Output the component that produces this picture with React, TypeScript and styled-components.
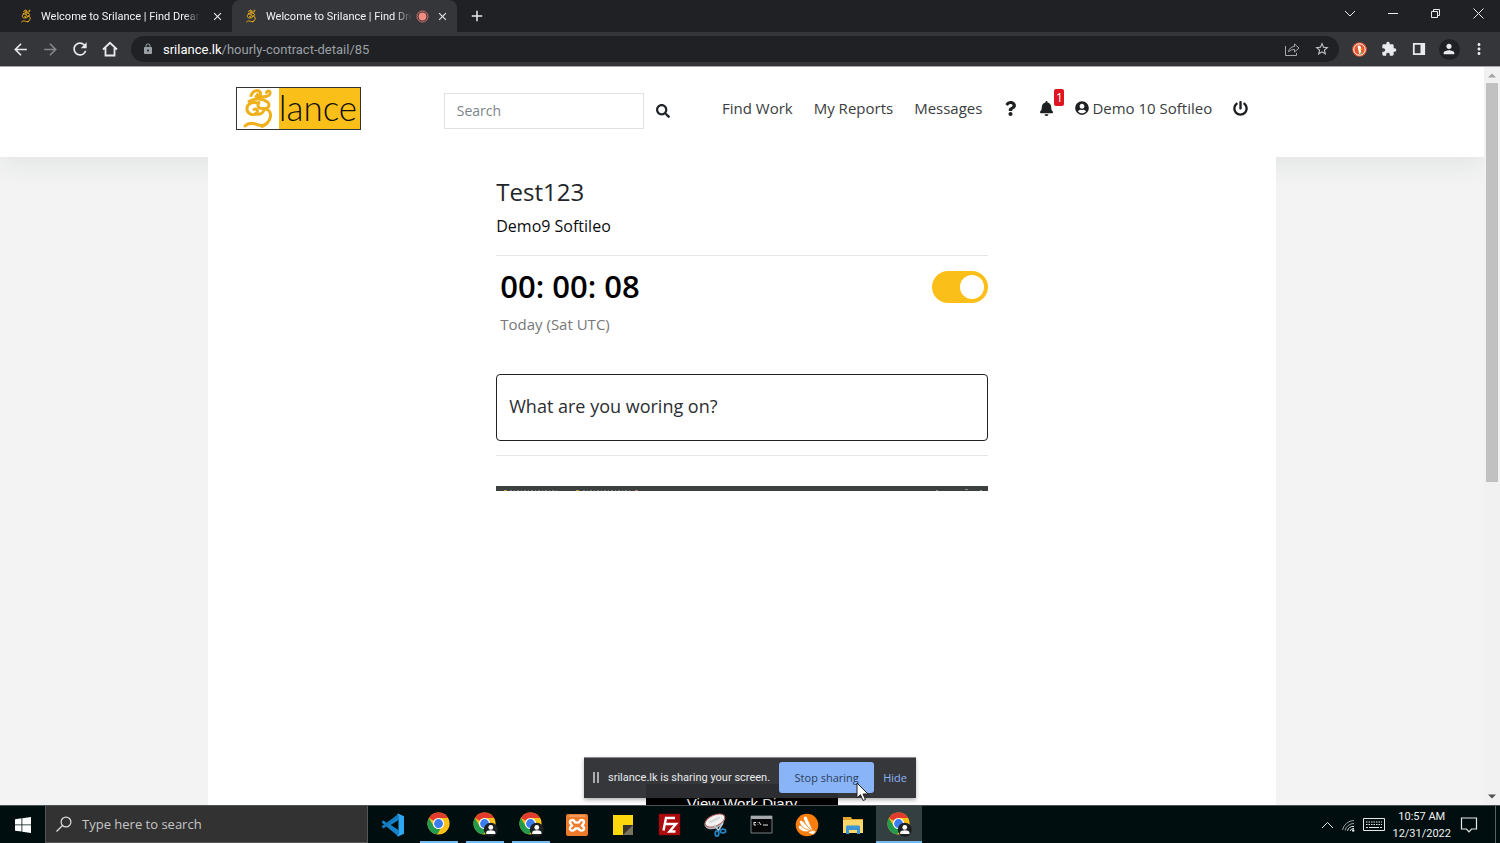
import React from "react";
import styled, { createGlobalStyle, css } from "styled-components";
import { FaSearch, FaQuestion, FaBell, FaUserCircle, FaPowerOff } from "react-icons/fa";
import {
  MdAdd,
  MdArrowBack,
  MdArrowForward,
  MdClose,
  MdExtension,
  MdLock,
  MdMoreVert,
  MdPerson,
  MdRefresh,
  MdStarBorder,
} from "react-icons/md";

const uiFont = '"Open Sans", "Noto Sans", sans-serif';
const compactFont = 'Roboto, "Open Sans", sans-serif';
const amber = "#fbbf1a";

const GlobalStyle = createGlobalStyle`
  *, *::before, *::after { box-sizing: border-box; }
  body { margin: 0; background: #fff; font-family: ${uiFont}; color: #212529; }
  button { border: 0; padding: 0; background: none; color: inherit; font: inherit; }
  a { color: inherit; text-decoration: none; }
  h1, h2, p { margin: 0; }
  svg { display: block; flex: none; }
`;

const Desktop = styled.div`
  position: relative;
  display: flex;
  flex-direction: column;
  height: 100vh;
  overflow: hidden;
`;

/* ---------- browser chrome ---------- */

const TabStrip = styled.div`
  display: flex;
  flex: none;
  height: 32px;
  padding-left: 7px;
  background: #202124;
  color: #e8eaed;
`;

const Tab = styled.div<{ $active?: boolean }>`
  display: flex;
  align-items: center;
  width: 225px;
  padding: 0 8px 0 12px;
  font: 11px ${compactFont};
  border-radius: 8px 8px 0 0;
  background: ${(p) => (p.$active ? "#35363a" : "transparent")};
`;

const TabTitle = styled.span<{ $fade: string }>`
  flex: 1;
  min-width: 0;
  margin: 0 4px 0 8px;
  overflow: hidden;
  white-space: nowrap;
  color: #f1f3f4;
  mask-image: linear-gradient(to right, #000 ${(p) => p.$fade}, transparent);
`;

const TabClose = styled.button`
  display: grid;
  place-items: center;
  width: 14px;
  height: 14px;
  margin-left: 6px;
`;

const NewTab = styled.button`
  display: grid;
  place-items: center;
  width: 40px;
`;

const WindowButtons = styled.div`
  display: flex;
  margin-left: auto;
  padding-bottom: 5px;
`;

const WindowButton = styled.button`
  display: grid;
  place-items: center;
  width: 43px;
`;

const Toolbar = styled.div`
  display: flex;
  align-items: center;
  flex: none;
  height: 34px;
  padding: 0 6px 0 5px;
  background: #35363a;
  color: #e8eaed;
`;

const ToolButton = styled.button<{ $dim?: boolean }>`
  display: grid;
  place-items: center;
  width: 30px;
  height: 28px;
  color: ${(p) => (p.$dim ? "#85878a" : "#e8eaed")};
`;

const Omnibox = styled.div`
  display: flex;
  align-items: center;
  flex: 1;
  height: 26px;
  margin: 0 5px 0 6px;
  padding: 0 2px 0 11px;
  border-radius: 13px;
  background: #202124;
  color: #9aa0a6;
  font: 13px ${compactFont};
`;

const Url = styled.span`
  flex: 1;
  margin-left: 9px;
  b { font-weight: 400; color: #fff; }
`;

const Avatar = styled.span`
  display: grid;
  place-items: center;
  width: 21px;
  height: 21px;
  border-radius: 50%;
  background: #202124;
`;

/* ---------- web page ---------- */

const Viewport = styled.div`
  display: flex;
  flex: 1;
  min-height: 0;
  border-top: 1px solid #a5a6a8;
`;

const Page = styled.div`
  flex: 1;
  min-width: 0;
  overflow: hidden;
  background: #f3f3f3;
`;

const SiteHeader = styled.header`
  height: 90px;
  background: #fff;
  box-shadow: 0 8px 24px rgba(40, 60, 60, 0.08);
`;

const HeaderInner = styled.div`
  display: flex;
  align-items: center;
  width: 72%;
  height: 82px;
  margin: 0 auto;
  padding: 0 28px;
`;

const Logo = styled.a`
  display: flex;
  width: 125px;
  height: 43px;
  border: 1px solid #333;
  background: #fff;
`;

const LogoWord = styled.span`
  flex: 1;
  background: ${amber};
  color: #111;
  font: 300 35px/39px Lato, sans-serif;
`;

const SearchForm = styled.form`
  display: flex;
  align-items: center;
  margin: 5px 0 0 83px;
`;

const SearchInput = styled.input`
  width: 200px;
  height: 36px;
  padding: 0 12px 1px;
  border: 1px solid #dfe1e3;
  background: #fff;
  font: 14px ${uiFont};
  &::placeholder { color: #7d8388; opacity: 1; }
`;

const SearchButton = styled.button`
  margin-left: 12px;
`;

const Nav = styled.nav`
  display: flex;
  align-items: center;
  gap: 21px;
  margin-left: auto;
  font-size: 15px;
  line-height: 20px;
  color: #3a3d40;
  white-space: nowrap;
  svg { color: #1d1f21; }
`;

const NavUser = styled.a`
  display: flex;
  align-items: center;
  gap: 3px;
`;

const Bell = styled.a`
  position: relative;
`;

const Badge = styled.span`
  position: absolute;
  left: 15px;
  top: -12px;
  width: 10px;
  border-radius: 2px;
  background: #df1522;
  color: #fff;
  font-size: 12px;
  line-height: 17px;
  text-align: center;
`;

const Sheet = styled.main`
  position: relative;
  width: 72%;
  min-height: 100%;
  margin: 0 auto;
  padding-top: 16px;
  background: #fff;
`;

const Contract = styled.section`
  display: flex;
  flex-direction: column;
  width: 46%;
  margin: 0 auto;
`;

const Title = styled.h1`
  font-size: 24px;
  font-weight: 400;
  line-height: 38px;
`;

const Client = styled.h2`
  font-size: 16px;
  font-weight: 400;
  line-height: 30px;
  color: #0c0d0e;
`;

const Rule = styled.hr`
  width: 100%;
  height: 1px;
  margin: 14px 0 0;
  border: 0;
  background: #e6e6e6;
`;

const TimerRow = styled.div`
  display: flex;
  align-items: center;
  justify-content: space-between;
  height: 62px;
  padding-left: 4px;
`;

const Timer = styled.time`
  font-size: 31px;
  font-weight: 600;
  line-height: 40px;
  padding-bottom: 2px;
  color: #000;
`;

const Switch = styled.input`
  appearance: none;
  width: 56px;
  height: 32px;
  margin: 0;
  padding: 4px;
  border-radius: 16px;
  background: ${amber};
  &::before {
    content: "";
    display: block;
    width: 24px;
    height: 24px;
    margin-left: 24px;
    border-radius: 50%;
    background: #fff;
  }
`;

const Today = styled.p`
  margin: -4px 0 40px;
  padding-left: 4px;
  font-size: 15px;
  line-height: 20px;
  color: #777;
`;

const TaskInput = styled.input`
  width: 100%;
  height: 67px;
  padding: 0 12px 4px;
  border: 1px solid #222;
  border-radius: 4px;
  background: #fff;
  color: #2b2e31;
  font: 18px ${uiFont};
`;

const LastCapture = styled.div`
  height: 298px;
  margin-top: 30px;
`;

const CaptureStrip = styled.div`
  height: 5px;
  background: #3c403f;
`;

const DiaryButton = styled.button`
  align-self: center;
  width: 192px;
  height: 38px;
  background: #000;
  color: #fff;
  font: 15px "Liberation Sans", Arial, sans-serif;
`;

const Scrollbar = styled.div`
  display: flex;
  flex-direction: column;
  align-items: center;
  justify-content: space-between;
  width: 16px;
  padding: 6px 0;
  background: #f1f1f1;
`;

const Thumb = styled.div`
  width: 12px;
  height: 55%;
  margin: 5px 0 auto;
  background: #c1c1c1;
`;

/* ---------- screen sharing notice ---------- */

const ShareBar = styled.div`
  position: absolute;
  left: 50%;
  bottom: 45px;
  transform: translateX(-50%);
  display: flex;
  align-items: center;
  width: 332px;
  height: 41px;
  padding: 0 9px 2px 9px;
  border-top: 1px solid #8a8b8d;
  background: rgba(46, 47, 50, 0.96);
  box-shadow: 0 2px 4px rgba(0, 0, 0, 0.3);
  color: #e8eaed;
  font-size: 11px;
  white-space: nowrap;
`;

const ShareText = styled.span`
  flex: 1;
  margin-left: 9px;
  font-family: ${compactFont};
`;

const StopButton = styled.button`
  width: 95px;
  height: 31px;
  border-radius: 3px;
  background: #8ab4f8;
  color: #2c3e5c;
`;

const HideButton = styled.button`
  margin-left: 9px;
  color: #8ab4f8;
`;

const Pointer = styled.svg`
  position: absolute;
  left: 272px;
  top: 24px;
`;

/* ---------- taskbar ---------- */

const Taskbar = styled.footer`
  display: flex;
  flex: none;
  height: 38px;
  border-top: 1px solid #4b5454;
  background: #000e0f;
  color: #e6e6e6;
`;

const StartButton = styled.button`
  display: grid;
  place-items: center;
  width: 45px;
`;

const TaskSearch = styled.label`
  display: flex;
  align-items: center;
  gap: 10px;
  width: 323px;
  margin-right: 2px;
  padding-left: 10px;
  border: 1px solid #565656;
  border-width: 0 1px 1px;
  background: #323232;
`;

const TaskSearchInput = styled.input`
  flex: 1;
  min-width: 0;
  padding: 0;
  border: 0;
  background: transparent;
  font: 13px ${uiFont};
  &::placeholder { color: #c6c6c6; opacity: 1; }
`;

const AppButton = styled.button<{ $running?: boolean; $active?: boolean }>`
  display: grid;
  place-items: center;
  width: 46px;
  ${(p) =>
    p.$running &&
    css`
      background: linear-gradient(#76b9ed, #76b9ed) center bottom / 38px 2px no-repeat;
    `}
  ${(p) =>
    p.$active &&
    css`
      background: linear-gradient(#76b9ed, #76b9ed) center bottom / 100% 2px no-repeat, #333f40;
    `}
`;

const Tray = styled.div`
  display: flex;
  align-items: center;
  gap: 7px;
  margin-left: auto;
  padding-right: 4px;
`;

const Clock = styled.time`
  font: 11px/17px ${compactFont};
  text-align: center;
  color: #f0f0f0;
`;

const ShowDesktop = styled.button`
  align-self: stretch;
  width: 1px;
  margin-left: 7px;
  background: #5a6363;
`;

/* ---------- drawings ---------- */

const SriMark = ({ w, h, weight }: { w: number; h: number; weight: number }) => (
  <svg width={w} height={h} viewBox="0 0 42 41" fill="none" stroke="#eeb11c" strokeWidth={weight} strokeLinecap="round">
    <path d="M14 7.500c2-5 7-6 9-3.500s-1 4-2.500 2.500M19 8.500c6 .5 13 1 14-3 .5-3-3-3.500-3.500-1" />
    <path d="M12 13.500c6-4 14-3 18.500.5 3 3 1 6.500-2.500 6.500" />
    <path d="M21 15c-7-1.500-11.500 1.500-11 6.500.5 4.500 6 6.500 9 4s.5-5.500-2-4" />
    <path d="M22 14.500c-2 3-1 6 3 6 6-.5 9 3 8.500 8C33 33 29 37 25 38.500" />
    <path d="M19 26c4 1 7-1 8-4" />
    <path d="M8 38c4-4 8-3 12-1.500s8 1 10-1.500" />
  </svg>
);

const ChromeLogo = ({ profile }: { profile?: boolean }) => (
  <svg width="25" height="25" viewBox="0 0 26 26">
    <circle cx="12" cy="12" r="11.5" fill="#fbc116" />
    <path d="M2 6.2A11.5 11.5 0 0 1 22 6.3H12A5.7 5.7 0 0 0 7 9.2z" fill="#e33b2e" />
    <path d="M2 6.2a11.5 11.5 0 0 0 8.6 17.2l5-8.6a5.7 5.7 0 0 1-8.6 0z" fill="#229c4c" />
    <circle cx="12" cy="12" r="5.8" fill="#fff" />
    <circle cx="12" cy="12" r="4.6" fill="#3b7ded" />
    {profile && (
      <g>
        <circle cx="18.5" cy="18.5" r="7.3" fill="#1f2022" />
        <circle cx="18.5" cy="16" r="2.5" fill="#fff" />
        <path d="M13.7 23v-1.5c0-3.3 9.6-3.3 9.6 0V23z" fill="#fff" />
      </g>
    )}
  </svg>
);

const CodeLogo = () => (
  <svg width="24" height="24" viewBox="0 0 24 24">
    <path d="M17.5 1 6.8 10.8 2.6 7.5 1 8.4v1.4l16.5 13.7V17L9.7 12l7.8-5z" fill="#1583cc" />
    <path d="m1 14.2 1.6 1.3L17.5 4V1L1 13z" fill="#1478bd" />
    <path d="M17 .5 23 3.3v17.4l-6 2.8-1-.4 1.5-1.800V2.800L16 .9z" fill="#2ea7f0" />
  </svg>
);

const XamppLogo = () => (
  <svg width="24" height="24" viewBox="0 0 24 24">
    <rect x="1" y="1" width="22" height="22" rx="2" fill="#ee7a2b" />
    <path d="M4 3h16" stroke="#f9bd91" />
    <path
      d="M9.500 8.500c-1-2.500-5-1.500-4.500 1 .2 1.500 1.500 2 2 3-1.500 1-3 3-1.500 4.500s4.500 0 5-1.500h3c.5 1.500 3.500 3 5 1.500s0-3.500-1.500-4.500c.5-1 1.800-1.500 2-3 .5-2.500-3.500-3.500-4.500-1-.5 1.500-4.500 1.500-5 0z"
      fill="none"
      stroke="#fff"
      strokeWidth="2.400"
    />
  </svg>
);

const NotesLogo = () => (
  <svg width="22" height="22" viewBox="0 0 22 22">
    <path d="M1 1h20v20H1z" fill="#fbd70c" />
    <path d="M11 11h10v10H11z" fill="#4a4738" />
    <path d="M11 21V11h10z" fill="#36342d" />
    <path d="M21 11v10H11z" fill="#77735f" />
  </svg>
);

const FileZillaLogo = () => (
  <svg width="23" height="23" viewBox="0 0 23 23">
    <rect x="1" y="1" width="21" height="21" fill="#ae0b0e" stroke="#7e0a0c" strokeDasharray="1 1" />
    <path d="M5.500 17.500 8 5h9M6.800 11h6M12 11h6l-6.500 7.500h6" fill="none" stroke="#fff" strokeWidth="2.400" />
  </svg>
);

const SnipLogo = () => (
  <svg width="25" height="24" viewBox="0 0 25 24">
    <ellipse cx="11.500" cy="9" rx="10.500" ry="6.500" transform="rotate(-24 11.500 9)" fill="#aeb4b8" />
    <ellipse cx="12" cy="7.500" rx="10.500" ry="5.500" transform="rotate(-24 12 7.500)" fill="#f1f1f1" stroke="#b8605c" />
    <path d="M6 9.500l11-5" stroke="#d4d7d9" strokeWidth="2" />
    <path d="m11 12 5 6M20 10l-5 8" stroke="#b9cfdf" strokeWidth="1.500" />
    <ellipse cx="14" cy="20.500" rx="1.800" ry="2.600" fill="none" stroke="#2682bf" strokeWidth="1.800" />
    <ellipse cx="20" cy="18" rx="2.600" ry="1.800" fill="none" stroke="#2682bf" strokeWidth="1.800" />
  </svg>
);

const TerminalLogo = () => (
  <svg width="23" height="20" viewBox="0 0 23 20">
    <path d="M1 1h21v17H1z" fill="#070707" stroke="#777f80" />
    <path d="M1 1h21v3H1z" fill="#a5abac" />
    <path d="M4 7.500h2M4 7v3h2M8 7v.5M8 9.500v.5M9 7l2 3M13 10h5" stroke="#e2e2e2" fill="none" />
  </svg>
);

const AvastLogo = () => (
  <svg width="24" height="24" viewBox="0 0 24 24">
    <circle cx="12" cy="12" r="11.300" fill="#fb7d0b" />
    <g fill="#fff" stroke="#fb7d0b" strokeWidth=".8">
      <path d="M3.300 14c.2-1.500 1.800-1.800 3-1.200L17 18c-5.500 2-12.500.5-13.700-4z" />
      <path d="M4.500 8.500c.5-1.500 2.300-1.500 3.300-.3L17.500 18C11 17 4.500 13.500 4.500 8.500z" />
      <path d="M8.500 4.500c.5-1.800 3-1.800 3.700 0L18 18C13.500 15.500 8.500 9.500 8.500 4.500z" />
      <path d="M16 17.800c2.500-.5 4 0 5 .7-1 1.500-2 2.500-3 3-2-.3-4-1-5-2.500z" />
    </g>
  </svg>
);

const ExplorerLogo = () => (
  <svg width="22" height="20" viewBox="0 0 22 20">
    <path d="M1 2h8l1 2h11v14H1z" fill="#e3a62c" />
    <path d="M1 5h20v13H1z" fill="#fbd668" />
    <path d="M4 19v-7c0-1 .5-1.500 1.500-1.500h11c1 0 1.500.5 1.500 1.500v7h-3v-4H7v4z" fill="#3c95d4" />
  </svg>
);

const taskbarApps = [
  { name: "Visual Studio Code", icon: <CodeLogo /> },
  { name: "Chrome", icon: <ChromeLogo />, running: true },
  { name: "Chrome, work profile", icon: <ChromeLogo profile />, running: true },
  { name: "Chrome, second profile", icon: <ChromeLogo profile />, running: true },
  { name: "XAMPP", icon: <XamppLogo /> },
  { name: "Sticky Notes", icon: <NotesLogo /> },
  { name: "FileZilla", icon: <FileZillaLogo /> },
  { name: "Snipping Tool", icon: <SnipLogo /> },
  { name: "Command Prompt", icon: <TerminalLogo /> },
  { name: "Antivirus", icon: <AvastLogo /> },
  { name: "File Explorer", icon: <ExplorerLogo /> },
  { name: "Chrome, current", icon: <ChromeLogo profile />, active: true },
];

const BrowserChrome = () => (
  <>
    <TabStrip>
      <Tab>
        <SriMark w={14} h={16} weight={3} />
        <TabTitle $fade="90%">Welcome to Srilance | Find Dream</TabTitle>
        <TabClose aria-label="Close tab"><MdClose size={13} /></TabClose>
      </Tab>
      <Tab $active>
        <SriMark w={14} h={16} weight={3} />
        <TabTitle $fade="88%">Welcome to Srilance | Find Dream</TabTitle>
        <svg width="13" height="13" viewBox="0 0 13 13">
          <circle cx="6.500" cy="6.500" r="5.500" fill="none" stroke="#d9746c" />
          <circle cx="6.500" cy="6.500" r="3.900" fill="#f28b82" />
        </svg>
        <TabClose aria-label="Close tab"><MdClose size={13} /></TabClose>
      </Tab>
      <NewTab aria-label="New tab"><MdAdd size={18} /></NewTab>
      <WindowButtons>
        <WindowButton aria-label="Search tabs">
          <svg width="12" height="8" viewBox="0 0 12 8" fill="none" stroke="currentColor"><path d="m1 1 5 5 5-5" /></svg>
        </WindowButton>
        <WindowButton aria-label="Minimize">
          <svg width="10" height="2" viewBox="0 0 10 2"><path d="M0 .5h10" stroke="currentColor" /></svg>
        </WindowButton>
        <WindowButton aria-label="Restore">
          <svg width="11" height="11" viewBox="0 0 11 11" fill="none" stroke="currentColor">
            <path d="M1.500 3.500h6v6h-6zM3.500 3.500v-2h6v6h-2" />
          </svg>
        </WindowButton>
        <WindowButton aria-label="Close">
          <svg width="11" height="11" viewBox="0 0 11 11" stroke="currentColor"><path d="m.5.500 10 10M10.500.5l-10 10" /></svg>
        </WindowButton>
      </WindowButtons>
    </TabStrip>
    <Toolbar>
      <ToolButton aria-label="Back"><MdArrowBack size={19} /></ToolButton>
      <ToolButton aria-label="Forward" $dim><MdArrowForward size={19} /></ToolButton>
      <ToolButton aria-label="Reload"><MdRefresh size={20} /></ToolButton>
      <ToolButton aria-label="Home">
        <svg width="16" height="16" viewBox="0 0 16 16" fill="none" stroke="currentColor" strokeWidth="1.800">
          <path d="M1 8.500 8 1.800l7 6.700M3.500 7v7.500h9V7" />
        </svg>
      </ToolButton>
      <Omnibox>
        <MdLock size={12} />
        <Url><b>srilance.lk</b>/hourly-contract-detail/85</Url>
        <ToolButton aria-label="Share">
          <svg width="15" height="14" viewBox="0 0 15 14" fill="none" stroke="#a5a8ab">
            <path d="M.5 4v9.500h11V11M3.500 10c.5-3.500 3-5.500 6-5.500V2l4.500 4-4.500 4V7.500c-2.500 0-4.500.5-6 2.500z" />
          </svg>
        </ToolButton>
        <ToolButton aria-label="Bookmark"><MdStarBorder size={16} color="#c4c7ca" /></ToolButton>
      </Omnibox>
      <ToolButton aria-label="DuckDuckGo">
        <svg width="15" height="15" viewBox="0 0 15 15">
          <circle cx="7.500" cy="7.500" r="7.300" fill="#e5542e" />
          <circle cx="7.500" cy="7.500" r="5.700" fill="none" stroke="#fff" />
          <path d="M5.500 4c2-1.200 4 0 3.500 3l.3 5-2 .3z" fill="#fff" />
          <path d="M7.500 6.500 11 7l-3 1.200z" fill="#fdc52b" />
          <path d="m7.500 10.500 3 .5-2.500 1.500z" fill="#58b947" />
        </svg>
      </ToolButton>
      <ToolButton aria-label="Extensions"><MdExtension size={16} /></ToolButton>
      <ToolButton aria-label="Side panel">
        <svg width="14" height="14" viewBox="0 0 14 14">
          <path d="M1.800 1.800h10.400v10.400H1.800z" fill="none" stroke="currentColor" strokeWidth="1.800" />
          <path d="M8.500 1h4.500v12H8.500z" fill="currentColor" />
        </svg>
      </ToolButton>
      <ToolButton aria-label="Profile"><Avatar><MdPerson size={16} /></Avatar></ToolButton>
      <ToolButton aria-label="Menu"><MdMoreVert size={18} /></ToolButton>
    </Toolbar>
  </>
);

export default function App() {
  return (
    <Desktop>
      <GlobalStyle />
      <BrowserChrome />
      <Viewport>
        <Page>
          <SiteHeader>
            <HeaderInner>
              <Logo href="#" aria-label="Srilance home">
                <SriMark w={42} h={41} weight={3} />
                <LogoWord>lance</LogoWord>
              </Logo>
              <SearchForm>
                <SearchInput type="text" aria-label="Search" placeholder="Search" />
                <SearchButton type="button" aria-label="Submit search"><FaSearch size={14} /></SearchButton>
              </SearchForm>
              <Nav>
                <a href="#">Find Work</a>
                <a href="#">My Reports</a>
                <a href="#">Messages</a>
                <a href="#" aria-label="Help"><FaQuestion size={15} /></a>
                <Bell href="#" aria-label="Notifications">
                  <FaBell size={15} />
                  <Badge>1</Badge>
                </Bell>
                <NavUser href="#"><FaUserCircle size={14} />Demo 10 Softileo</NavUser>
                <a href="#" aria-label="Log out"><FaPowerOff size={15} /></a>
              </Nav>
            </HeaderInner>
          </SiteHeader>
          <Sheet>
            <Contract>
              <Title>Test123</Title>
              <Client>Demo9 Softileo</Client>
              <Rule />
              <TimerRow>
                <Timer>00: 00: 08</Timer>
                <Switch type="checkbox" role="switch" aria-label="Track time" defaultChecked />
              </TimerRow>
              <Today>Today (Sat UTC)</Today>
              <TaskInput type="text" aria-label="Current task" defaultValue="What are you woring on?" />
              <Rule />
              <LastCapture>
                <CaptureStrip>
                  <svg width="100%" height="5">
                    <path d="M8 4.500h3M80 4.500h3" stroke="#b59a3a" />
                    <path d="M14 4.500h48M87 4.500h48" stroke="#777b7a" strokeDasharray="2 2 1 2" />
                    <path d="M139 4.500h3" stroke="#b07a76" />
                    <path d="M440 4.500h2M469 3.500h3M484 4.500h2" stroke="#8b8f8e" />
                  </svg>
                </CaptureStrip>
              </LastCapture>
              <DiaryButton>View Work Diary</DiaryButton>
            </Contract>
          </Sheet>
        </Page>
        <Scrollbar>
          <svg width="8" height="5" viewBox="0 0 8 5"><path d="M0 4.500 4 .5l4 4z" fill="#a3a3a3" /></svg>
          <Thumb />
          <svg width="8" height="5" viewBox="0 0 8 5"><path d="M0 .5h8l-4 4z" fill="#505050" /></svg>
        </Scrollbar>
      </Viewport>
      <Taskbar>
        <StartButton aria-label="Start">
          <svg width="16" height="16" viewBox="0 0 16 16" fill="#fff">
            <path d="M0 2.200 6.500 1.300v6.200H0zM7.300 1.200 16 0v7.500H7.300zM0 8.300h6.500v6.300L0 13.700zM7.300 8.300H16V16l-8.700-1.200z" />
          </svg>
        </StartButton>
        <TaskSearch>
          <svg width="16" height="16" viewBox="0 0 16 16" fill="none" stroke="#dedede" strokeWidth="1.200">
            <circle cx="10" cy="6" r="4.900" />
            <path d="M6.500 9.500.5 15.500" />
          </svg>
          <TaskSearchInput type="text" aria-label="Search Windows" placeholder="Type here to search" />
        </TaskSearch>
        {taskbarApps.map((app) => (
          <AppButton key={app.name} aria-label={app.name} $running={app.running} $active={app.active}>
            {app.icon}
          </AppButton>
        ))}
        <Tray>
          <svg width="13" height="8" viewBox="0 0 13 8" fill="none" stroke="#e6e6e6"><path d="m1 7 5.500-5.500L12 7" /></svg>
          <svg width="15" height="14" viewBox="0 0 15 14" fill="none" stroke="#e6e6e6">
            <g stroke="#9ba1a1"><path d="M1.500 12A12 12 0 0 1 13 2.500M4 12.500a9 9 0 0 1 9-7" /></g>
            <path d="M6.500 12.800A6 6 0 0 1 13 8.500M9 13a4 4 0 0 1 4-2.500" />
            <circle cx="12.200" cy="12.500" r="1.200" fill="#e6e6e6" stroke="none" />
          </svg>
          <svg width="22" height="14" viewBox="0 0 22 14" fill="none" stroke="#e6e6e6">
            <path d="M.5.500h21v12H.5z" />
            <path d="M3 4h16M3 6.500h16" strokeDasharray="1.500 1" />
            <path d="M3 9.500h2M6 9.500h10M17 9.500h2" />
          </svg>
          <Clock>10:57 AM<br />12/31/2022</Clock>
          <svg width="23" height="16" viewBox="-3 0 23 16" fill="none" stroke="#e6e6e6" strokeWidth="1.200">
            <path d="M.5 1h15v11h-5l-2.500 2.800L5.500 12h-5z" />
          </svg>
          <ShowDesktop aria-label="Show desktop" />
        </Tray>
      </Taskbar>
      <ShareBar>
        <svg width="6" height="11" viewBox="0 0 6 11"><path d="M1 0v11M5 0v11" stroke="#c9cbce" strokeWidth="1.600" /></svg>
        <ShareText>srilance.lk is sharing your screen.</ShareText>
        <StopButton>Stop sharing</StopButton>
        <HideButton>Hide</HideButton>
        <Pointer width="13" height="20" viewBox="0 0 13 20">
          <path d="M1 1v15l3.500-3.300L7 18.500l2.500-1L7 12h5z" fill="#fff" stroke="#222" strokeWidth="1" />
        </Pointer>
      </ShareBar>
    </Desktop>
  );
}
